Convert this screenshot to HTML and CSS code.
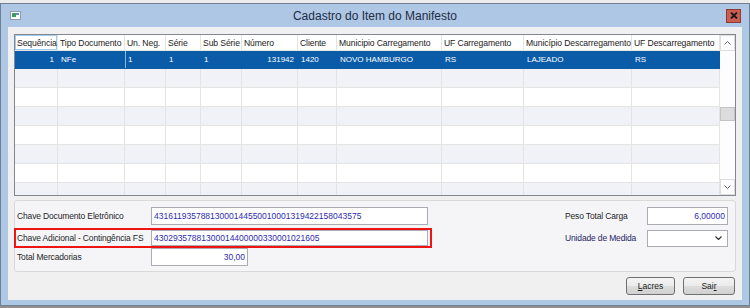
FILE: index.html
```html
<!DOCTYPE html>
<html lang="pt-BR">
<head>
    <meta charset="UTF-8">
    <title>Cadastro do Item do Manifesto</title>
    <link rel="stylesheet" href="styles.css">
</head>
<body>
    <div class="behind"></div>
    <div class="window">
        <div class="titlebar">
            <div class="tb-left">
                <svg class="app-icon" width="11" height="9" viewBox="0 0 11 9">
                    <rect x="0.5" y="0.5" width="10" height="8" fill="#fff" stroke="#8d9db2"/>
                    <rect x="2" y="2" width="4" height="4" fill="#3d9b5c"/>
                    <rect x="6" y="2" width="3" height="2" fill="#5a8ccc"/>
                </svg>
            </div>
            <div class="title">Cadastro do Item do Manifesto</div>
            <div class="tb-right">
                <div class="close-btn">
                    <svg width="8" height="7" viewBox="0 0 8 7">
                        <path d="M1 0.5 L7 6.5 M7 0.5 L1 6.5" stroke="#1a1a1a" stroke-width="1.8"/>
                    </svg>
                </div>
            </div>
        </div>

        <div class="client">
            <div class="grid">
                <div class="rows">
                    <div class="row head">
                        <div class="cell focus">Sequência</div>
                        <div class="cell">Tipo Documento</div>
                        <div class="cell">Un. Neg.</div>
                        <div class="cell">Série</div>
                        <div class="cell">Sub Série</div>
                        <div class="cell">Número</div>
                        <div class="cell">Cliente</div>
                        <div class="cell">Municipio Carregamento</div>
                        <div class="cell">UF Carregamento</div>
                        <div class="cell">Município Descarregamento</div>
                        <div class="cell">UF Descarregamento</div>
                    </div>
                    <div class="row sel">
                        <div class="cell num">1</div>
                        <div class="cell">NFe</div>
                        <div class="cell caret">1</div>
                        <div class="cell">1</div>
                        <div class="cell">1</div>
                        <div class="cell num">131942</div>
                        <div class="cell">1420</div>
                        <div class="cell">NOVO HAMBURGO</div>
                        <div class="cell">RS</div>
                        <div class="cell">LAJEADO</div>
                        <div class="cell">RS</div>
                    </div>
                    <div class="row stripe"><div class="cell"></div><div class="cell"></div><div class="cell"></div><div class="cell"></div><div class="cell"></div><div class="cell"></div><div class="cell"></div><div class="cell"></div><div class="cell"></div><div class="cell"></div><div class="cell"></div></div>
                    <div class="row"><div class="cell"></div><div class="cell"></div><div class="cell"></div><div class="cell"></div><div class="cell"></div><div class="cell"></div><div class="cell"></div><div class="cell"></div><div class="cell"></div><div class="cell"></div><div class="cell"></div></div>
                    <div class="row stripe"><div class="cell"></div><div class="cell"></div><div class="cell"></div><div class="cell"></div><div class="cell"></div><div class="cell"></div><div class="cell"></div><div class="cell"></div><div class="cell"></div><div class="cell"></div><div class="cell"></div></div>
                    <div class="row"><div class="cell"></div><div class="cell"></div><div class="cell"></div><div class="cell"></div><div class="cell"></div><div class="cell"></div><div class="cell"></div><div class="cell"></div><div class="cell"></div><div class="cell"></div><div class="cell"></div></div>
                    <div class="row stripe"><div class="cell"></div><div class="cell"></div><div class="cell"></div><div class="cell"></div><div class="cell"></div><div class="cell"></div><div class="cell"></div><div class="cell"></div><div class="cell"></div><div class="cell"></div><div class="cell"></div></div>
                    <div class="row"><div class="cell"></div><div class="cell"></div><div class="cell"></div><div class="cell"></div><div class="cell"></div><div class="cell"></div><div class="cell"></div><div class="cell"></div><div class="cell"></div><div class="cell"></div><div class="cell"></div></div>
                    <div class="row stripe"><div class="cell"></div><div class="cell"></div><div class="cell"></div><div class="cell"></div><div class="cell"></div><div class="cell"></div><div class="cell"></div><div class="cell"></div><div class="cell"></div><div class="cell"></div><div class="cell"></div></div>
                </div>
                <div class="vscroll">
                    <div class="sb-btn">
                        <svg width="7" height="4" viewBox="0 0 7 4"><path d="M0.5 3.5 L3.5 0.5 L6.5 3.5" fill="none" stroke="#606060"/></svg>
                    </div>
                    <div class="sb-track"><div class="sb-thumb"></div></div>
                    <div class="sb-btn">
                        <svg width="7" height="4" viewBox="0 0 7 4"><path d="M0.5 0.5 L3.5 3.5 L6.5 0.5" fill="none" stroke="#606060"/></svg>
                    </div>
                </div>
            </div>

            <div class="panel">
                <div class="fields">
                    <div class="field">
                        <label>Chave Documento Eletrônico</label>
                        <input class="txt key" type="text" value="43161193578813000144550010001319422158043575" readonly>
                    </div>
                    <div class="field hl">
                        <label>Chave Adicional - Contingência FS</label>
                        <input class="txt key" type="text" value="43029357881300014400000330001021605" readonly>
                    </div>
                    <div class="field">
                        <label>Total Mercadorias</label>
                        <input class="txt money" type="text" value="30,00" readonly>
                    </div>
                </div>
                <div class="side">
                    <div class="field">
                        <label>Peso Total Carga</label>
                        <input class="txt small" type="text" value="6,00000" readonly>
                    </div>
                    <div class="field">
                        <label class="navy">Unidade de Medida</label>
                        <div class="combo">
                            <svg width="7" height="4" viewBox="0 0 7 4"><path d="M0.5 0.5 L3.5 3.5 L6.5 0.5" fill="none" stroke="#333" stroke-width="1.2"/></svg>
                        </div>
                    </div>
                </div>
            </div>

            <div class="actions">
                <button class="btn lacres"><u>L</u>acres</button>
                <button class="btn sair">Sai<u>r</u></button>
            </div>
        </div>
    </div>
</body>
</html>
```

FILE: styles.css
```css
body {
    margin: 0;
    width: 750px;
    height: 308px;
    overflow: hidden;
    background-color: #8f8f8f;
    font-family: "Liberation Sans", Arial, sans-serif;
}

.behind {
    height: 3px;
    background-color: #ececec;
}

.window {
    box-sizing: border-box;
    height: 303px;
    border: 1px solid #6f7f94;
    background-color: #aec7e4;
    padding: 0 7px 5px 7px;
    display: flex;
    flex-direction: column;
}

.titlebar {
    height: 23px;
    display: grid;
    grid-template-columns: 1fr auto 1fr;
    align-items: center;
}

.app-icon {
    display: block;
    margin-left: 2px;
}

.title {
    font-size: 12px;
    color: #1e2d45;
}

.tb-right {
    display: flex;
    justify-content: flex-end;
}

.close-btn {
    box-sizing: border-box;
    width: 15px;
    height: 14px;
    margin-right: 1px;
    background-color: #cb5d50;
    border: 1px solid #8c3b31;
    display: flex;
    align-items: center;
    justify-content: center;
}

.client {
    flex: 1;
    background-color: #f0f0f0;
    padding: 7px 6px 0 6px;
    display: flex;
    flex-direction: column;
}

/* grid */
.grid {
    box-sizing: border-box;
    height: 162px;
    border: 1px solid #828790;
    background-color: #fff;
    display: flex;
    overflow: hidden;
}

.rows {
    flex: 1;
    overflow: hidden;
}

.row {
    display: grid;
    grid-template-columns: 43px 67px 41px 35px 41px 56px 39px 105px 82px 108px 88px;
    box-sizing: border-box;
    height: 19px;
    border-bottom: 1px solid #e4e4e4;
    font-size: 8px;
    color: #222;
}

.cell {
    box-sizing: border-box;
    border-right: 1px solid #e4e4e4;
    padding: 0 3px;
    display: flex;
    align-items: center;
    white-space: nowrap;
    overflow: hidden;
}

.head {
    height: 16px;
    font-size: 8.6px;
    letter-spacing: -0.1px;
    color: #1b1b1b;
}

.head .cell {
    padding: 0 2px;
}

.focus {
    box-shadow: inset 0 0 0 1px #9dcdee;
}

.sel {
    height: 18px;
    background-color: #0b5ca8;
    color: #fff;
    border-bottom-color: #0b5ca8;
}

.sel .cell {
    border-right-color: #0b5ca8;
}

.caret {
    box-shadow: inset 1px 0 0 0 #8fb6dc;
}

.num {
    justify-content: flex-end;
}

.stripe {
    background-color: #f1f2f8;
}

.vscroll {
    width: 15px;
    display: flex;
    flex-direction: column;
    background-color: #fdfdfd;
}

.sb-btn {
    box-sizing: border-box;
    height: 16px;
    border: 1px solid #dedede;
    display: flex;
    align-items: center;
    justify-content: center;
}

.sb-track {
    flex: 1;
}

.sb-thumb {
    box-sizing: border-box;
    height: 14px;
    margin-top: 56px;
    background-color: #dcdcdc;
    border: 1px solid #c4c4c4;
}

/* bottom panel */
.panel {
    box-sizing: border-box;
    height: 72px;
    margin-top: 4px;
    border: 1px solid #d9d9d9;
    border-radius: 3px;
    background-color: #f5f5f8;
    padding: 6px 7px 0 0;
    display: flex;
    justify-content: space-between;
}

.fields {
    display: flex;
    flex-direction: column;
}

.field {
    display: flex;
    align-items: center;
    height: 18px;
    padding-left: 2px;
    font-size: 8.5px;
    letter-spacing: -0.15px;
    color: #1f1f1f;
}

.fields label {
    width: 134px;
}

.field.hl {
    box-sizing: border-box;
    width: 418px;
    height: 20px;
    margin: 3px 0 0 -1px;
    padding: 0 2px 0 1px;
    border: 2px solid #ee1414;
}

.txt {
    box-sizing: border-box;
    height: 18px;
    margin: 0;
    padding: 0 2px;
    border: 1px solid #a9acb3;
    background-color: #fff;
    font-family: "Liberation Sans", Arial, sans-serif;
    font-size: 8.5px;
    color: #2c2cb4;
    outline: none;
}

.txt.key {
    width: 277px;
}

.hl .txt {
    height: 16px;
}

.txt.money {
    width: 97px;
    text-align: right;
}

.side {
    display: flex;
    flex-direction: column;
    gap: 4px;
}

.side label {
    width: 82px;
}

.navy {
    color: #1f2565;
}

.txt.small {
    width: 81px;
    text-align: right;
}

.combo {
    box-sizing: border-box;
    width: 81px;
    height: 17px;
    border: 1px solid #a9acb3;
    background-color: #fff;
    display: flex;
    align-items: center;
    justify-content: flex-end;
    padding-right: 5px;
}

.actions {
    display: flex;
    justify-content: flex-end;
    gap: 8px;
    margin-top: 5px;
    padding-right: 1px;
}

.btn {
    box-sizing: border-box;
    height: 18px;
    border: 1px solid #707070;
    border-radius: 3px;
    background: linear-gradient(#f3f3f3, #ebebeb 50%, #dddddd 50%, #d0d0d0);
    font-family: "Liberation Sans", Arial, sans-serif;
    font-size: 8.5px;
    color: #1a1a1a;
    padding: 0;
}

.lacres {
    width: 49px;
}

.sair {
    width: 52px;
}
```
